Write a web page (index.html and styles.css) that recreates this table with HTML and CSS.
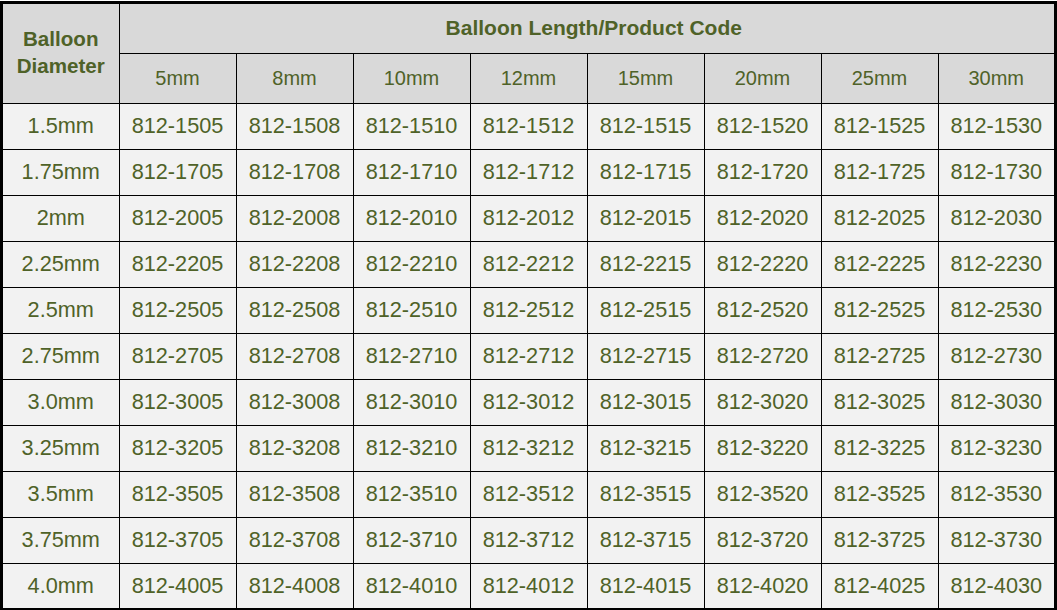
FILE: index.html
```html
<!DOCTYPE html>
<html>
<head>
<meta charset="utf-8">
<link rel="stylesheet" href="styles.css">
</head>
<body>
<div class="frame">
<table class="codes">
<colgroup>
<col class="c-first"><col class="c-len"><col class="c-len"><col class="c-len"><col class="c-len"><col class="c-len"><col class="c-len"><col class="c-len"><col>
</colgroup>
<thead>
<tr class="h1">
<th rowspan="2" class="diam">Balloon<br>Diameter</th>
<th colspan="8" class="title">Balloon Length/Product Code</th>
</tr>
<tr class="h2">
<th>5mm</th><th>8mm</th><th>10mm</th><th>12mm</th><th>15mm</th><th>20mm</th><th>25mm</th><th>30mm</th>
</tr>
</thead>
<tbody>
<tr><td>1.5mm</td><td>812-1505</td><td>812-1508</td><td>812-1510</td><td>812-1512</td><td>812-1515</td><td>812-1520</td><td>812-1525</td><td>812-1530</td></tr>
<tr><td>1.75mm</td><td>812-1705</td><td>812-1708</td><td>812-1710</td><td>812-1712</td><td>812-1715</td><td>812-1720</td><td>812-1725</td><td>812-1730</td></tr>
<tr><td>2mm</td><td>812-2005</td><td>812-2008</td><td>812-2010</td><td>812-2012</td><td>812-2015</td><td>812-2020</td><td>812-2025</td><td>812-2030</td></tr>
<tr><td>2.25mm</td><td>812-2205</td><td>812-2208</td><td>812-2210</td><td>812-2212</td><td>812-2215</td><td>812-2220</td><td>812-2225</td><td>812-2230</td></tr>
<tr><td>2.5mm</td><td>812-2505</td><td>812-2508</td><td>812-2510</td><td>812-2512</td><td>812-2515</td><td>812-2520</td><td>812-2525</td><td>812-2530</td></tr>
<tr><td>2.75mm</td><td>812-2705</td><td>812-2708</td><td>812-2710</td><td>812-2712</td><td>812-2715</td><td>812-2720</td><td>812-2725</td><td>812-2730</td></tr>
<tr><td>3.0mm</td><td>812-3005</td><td>812-3008</td><td>812-3010</td><td>812-3012</td><td>812-3015</td><td>812-3020</td><td>812-3025</td><td>812-3030</td></tr>
<tr><td>3.25mm</td><td>812-3205</td><td>812-3208</td><td>812-3210</td><td>812-3212</td><td>812-3215</td><td>812-3220</td><td>812-3225</td><td>812-3230</td></tr>
<tr><td>3.5mm</td><td>812-3505</td><td>812-3508</td><td>812-3510</td><td>812-3512</td><td>812-3515</td><td>812-3520</td><td>812-3525</td><td>812-3530</td></tr>
<tr><td>3.75mm</td><td>812-3705</td><td>812-3708</td><td>812-3710</td><td>812-3712</td><td>812-3715</td><td>812-3720</td><td>812-3725</td><td>812-3730</td></tr>
<tr class="last"><td>4.0mm</td><td>812-4005</td><td>812-4008</td><td>812-4010</td><td>812-4012</td><td>812-4015</td><td>812-4020</td><td>812-4025</td><td>812-4030</td></tr>
</tbody>
</table>
</div>
</body>
</html>
```
FILE: styles.css
```css
html, body {
  margin: 0;
  padding: 0;
  background: #ffffff;
}
.frame {
  margin-top: 1px;
  width: 1051px;
  border: 3px solid #000;
  background: #f2f2f2;
}
.codes {
  width: 1051px;
  border-collapse: collapse;
  border-style: hidden;
  table-layout: fixed;
  font-family: "Liberation Sans", Arial, sans-serif;
  color: #4f6228;
}
.c-first {
  width: 116px;
}
.c-len {
  width: 117px;
}
.codes th, .codes td {
  border: 1px solid #000;
  padding: 0;
  text-align: center;
  vertical-align: middle;
}
.codes th {
  background: #d9d9d9;
  font-size: 20px;
  font-weight: normal;
}
.codes th.title {
  font-weight: bold;
  font-size: 21px;
  padding-left: 14px;
}
.codes th.diam {
  font-weight: bold;
  font-size: 20.6px;
  line-height: 27px;
  padding-bottom: 3px;
}
.h1 {
  height: 49px;
}
.h2 {
  height: 50px;
}
.codes td {
  background: #f2f2f2;
  font-size: 21.7px;
}
.codes tbody tr {
  height: 46px;
}
.codes tbody tr.last {
  height: 45px;
}
```
